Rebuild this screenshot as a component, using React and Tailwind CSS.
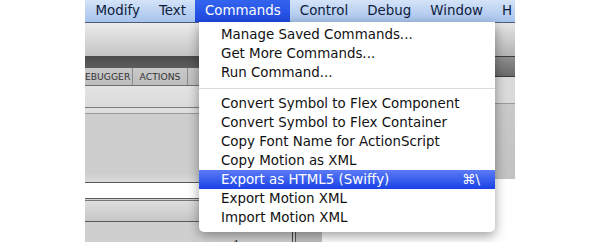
import React from "react";

const font = { fontFamily: '"DejaVu Sans", "Liberation Sans", sans-serif' };

const items = [
  { t: "Manage Saved Commands..." },
  { t: "Get More Commands..." },
  { t: "Run Command..." },
  { sep: true },
  { t: "Convert Symbol to Flex Component" },
  { t: "Convert Symbol to Flex Container" },
  { t: "Copy Font Name for ActionScript" },
  { t: "Copy Motion as XML" },
  { t: "Export as HTML5 (Swiffy)", hi: true, k: "⌘\\" },
  { t: "Export Motion XML" },
  { t: "Import Motion XML" },
];

const bar = ["Modify", "Text", "Commands", "Control", "Debug", "Window", "H"];

export default function App() {
  return (
    <div
      className="relative w-[600px] h-[242px] bg-white overflow-hidden pl-[85px]"
      style={font}
    >
      <div className="w-[430px] h-full flex flex-col">
        {/* menubar */}
        <div className="h-[23px] flex items-stretch pl-[1px] bg-gradient-to-b from-[#d4e3f8] to-[#a6c2ec] border-b border-[#4d5e78] overflow-hidden">
          {bar.map((b) => (
            <div
              key={b}
              className={
                "px-[9.5px] flex items-center text-[13.4px] leading-none whitespace-nowrap " +
                (b === "Commands"
                  ? "bg-gradient-to-b from-[#3464ee] to-[#1e48e0] text-white"
                  : "text-[#0f1c3c]")
              }
            >
              {b}
            </div>
          ))}
        </div>
        <div className="flex flex-1">
          {/* left panel */}
          <div className="w-[114px] flex flex-col">
            <div className="h-[33px] bg-gradient-to-b from-[#ececec] to-[#c4c4c4]" />
            <div className="h-[12px] bg-gradient-to-b from-[#4a4a4a] to-[#5e5e5e]" />
            <div className="h-[18px] bg-gradient-to-b from-[#c9c9c9] to-[#bdbdbd] border-b border-[#6e6e6e] flex items-center text-[9.2px] text-[#333] leading-none">
              <div className="w-[48px] h-full flex items-center border-r border-[#8a8a8a]">EBUGGER</div>
              <div className="w-[55px] h-full flex items-center justify-center border-r border-[#8a8a8a]">ACTIONS</div>
            </div>
            <div className="h-[21px] bg-gradient-to-b from-[#e4e4e4] to-[#dadada]" />
            <div className="h-px bg-[#7e7e7e]" />
            <div className="h-[5px] bg-[#dedede]" />
            <div className="h-px bg-[#9a9a9a]" />
            <div className="h-[59px] bg-[#cdcdcd]" />
            <div className="h-[9px] bg-gradient-to-b from-[#cdcdcd] to-[#dcdcdc]" />
            <div className="h-px bg-[#575757]" />
            <div className="h-[15px] bg-white" />
            <div className="h-px bg-[#5e5e5e]" />
            <div className="h-px bg-[#d0d0d0]" />
            <div className="h-px bg-[#777]" />
            <div className="h-[20px] bg-gradient-to-b from-[#dedede] to-[#c6c6c6]" />
            <div className="h-px bg-[#5a5a5a]" />
            <div className="flex-1 bg-[#cfcfcf]" />
          </div>
          {/* middle (under menu) */}
          <div className="w-[296px] flex flex-col justify-end">
            <div className="w-[123px] h-[14px] bg-[#d3d3d3] flex items-start overflow-hidden">
              <div className="ml-[34px] mt-[9px] text-[13px] leading-none text-[#222]" style={{ fontFamily: '"Liberation Serif", serif' }}>1</div>
              <div className="ml-[52px] h-full w-px bg-[#444]" />
              <div className="ml-[2px] h-full w-px bg-[#555]" />
              <div className="flex-1 h-full bg-[#c4c4c4]" />
            </div>
          </div>
          {/* right panel */}
          <div className="w-[20px] flex flex-col">
            <div className="h-[33px] bg-gradient-to-b from-[#e6e6e6] to-[#b2b2b2]" />
            <div className="h-px bg-[#3c3c3c]" />
            <div className="h-[19px] bg-gradient-to-b from-[#8e8e8e] to-[#6a6a6a]" />
            <div className="h-px bg-[#3a3a3a]" />
            <div className="h-[26px] bg-[#dadada]" />
            <div className="h-px bg-[#9a9a9a]" />
            <div className="h-[75px] bg-gradient-to-b from-[#c9c9c9] to-[#c2c2c2]" />
          </div>
        </div>
      </div>

      {/* dropdown menu */}
      <div className="absolute left-[199px] top-[22px] w-[296px] pt-[3px] pb-[5px] bg-white rounded-b-[5px] shadow-[0_4px_12px_rgba(0,0,0,0.38)]">
        {items.map((it, i) =>
          it.sep ? (
            <div key={i} className="h-[12px] flex items-center">
              <div className="h-px w-full bg-[#dcdcdc]" />
            </div>
          ) : (
            <div
              key={i}
              className={
                "h-[19px] flex items-center pl-[22px] pr-[15px] text-[13.4px] leading-none whitespace-nowrap " +
                (it.hi
                  ? "bg-gradient-to-b from-[#5b7af6] to-[#1a3fe6] text-white"
                  : "text-[#111]")
              }
            >
              <span className="flex-1">{it.t}</span>
              {it.k && <span>{it.k}</span>}
            </div>
          )
        )}
      </div>
    </div>
  );
}
